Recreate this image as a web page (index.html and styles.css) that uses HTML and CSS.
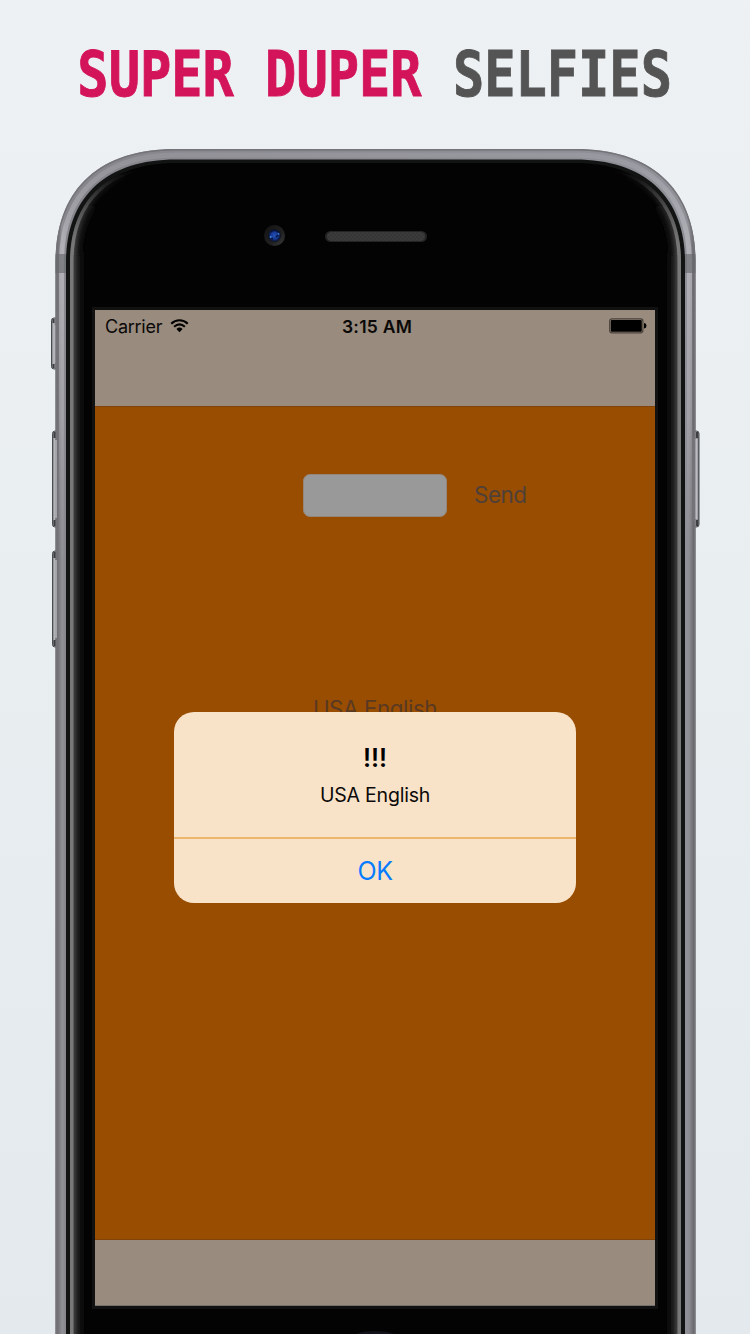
FILE: index.html
```html
<!DOCTYPE html>
<html lang="en">
<head>
<meta charset="utf-8">
<title>Super Duper Selfies</title>
<link rel="stylesheet" href="styles.css">
</head>
<body>
<main class="poster">
  <h1 class="headline"><span class="headline-accent">SUPER DUPER</span> SELFIES</h1>
  <svg class="device-art" viewBox="0 0 750 1334" aria-hidden="true">
    <defs>
      <linearGradient id="metal" gradientUnits="userSpaceOnUse" x1="55" x2="696" y1="0" y2="0">
        <stop offset="0" stop-color="#66666b"/><stop offset=".006" stop-color="#77777c"/>
        <stop offset=".011" stop-color="#919198"/><stop offset=".017" stop-color="#85858b"/>
        <stop offset=".983" stop-color="#909098"/><stop offset=".989" stop-color="#8d8d94"/>
        <stop offset=".995" stop-color="#707075"/><stop offset="1" stop-color="#5c5c61"/>
      </linearGradient>
      <linearGradient id="sheen" gradientUnits="userSpaceOnUse" x1="0" x2="0" y1="149" y2="560">
        <stop offset="0" stop-color="#c4c4cb" stop-opacity=".15"/><stop offset=".25" stop-color="#c8c8ce" stop-opacity=".6"/>
        <stop offset=".65" stop-color="#c4c4c9" stop-opacity=".35"/><stop offset="1" stop-color="#aaa" stop-opacity="0"/>
      </linearGradient>
      <linearGradient id="glowWide" gradientUnits="userSpaceOnUse" x1="0" x2="0" y1="180" y2="280">
        <stop offset="0" stop-color="#161616" stop-opacity="0"/><stop offset="1" stop-color="#161616"/>
      </linearGradient>
      <linearGradient id="glowMid" gradientUnits="userSpaceOnUse" x1="0" x2="0" y1="172" y2="250">
        <stop offset="0" stop-color="#444" stop-opacity="0"/><stop offset="1" stop-color="#444"/>
      </linearGradient>
      <linearGradient id="glowThin" gradientUnits="userSpaceOnUse" x1="0" x2="0" y1="170" y2="245">
        <stop offset="0" stop-color="#777" stop-opacity="0"/><stop offset="1" stop-color="#787878"/>
      </linearGradient>
      <linearGradient id="button" x1="0" x2="1" y1="0" y2="0">
        <stop offset="0" stop-color="#66676b"/><stop offset=".3" stop-color="#b8b9bd"/>
        <stop offset=".6" stop-color="#9a9ba0"/><stop offset="1" stop-color="#606166"/>
      </linearGradient>
      <radialGradient id="lens"><stop offset="0" stop-color="#2450b4"/><stop offset=".55" stop-color="#173995"/><stop offset="1" stop-color="#080d20"/></radialGradient>
      <linearGradient id="ring" x1="0" y1="0" x2="1" y2="1"><stop offset="0" stop-color="#121212"/><stop offset=".6" stop-color="#202020"/><stop offset="1" stop-color="#3c3c3c"/></linearGradient>
      <pattern id="mesh" width="4" height="4" patternUnits="userSpaceOnUse">
        <rect width="4" height="4" fill="#3b3b3b"/><circle cx="1" cy="1" r=".8" fill="#2f2f2f"/><circle cx="3" cy="3" r=".8" fill="#2f2f2f"/>
      </pattern>
      <path id="shell" d="M55.500 1400V262C55.500 190 98 149 176 149H575C653 149 695.500 190 695.500 262V1400Z"/>
      <path id="glass" d="M70 1400V262C70 201 107 163 176 163H575C644 163 681 201 681 262V1400Z"/>
      <clipPath id="shellClip"><use href="#shell"/></clipPath>
      <clipPath id="glassClip"><use href="#glass"/></clipPath>
      <filter id="wide" x="-5%" y="-5%" width="110%" height="110%"><feGaussianBlur stdDeviation="3.200"/></filter>
      <filter id="soft" x="-5%" y="-5%" width="110%" height="110%"><feGaussianBlur stdDeviation="2"/></filter>
      <filter id="fine" x="-5%" y="-5%" width="110%" height="110%"><feGaussianBlur stdDeviation=".7"/></filter>
    </defs>

    <g fill="url(#button)" stroke="#4b4c50" stroke-width="1">
      <rect x="51.500" y="318" width="6" height="51" rx="2.500"/>
      <rect x="52.500" y="431" width="6" height="96" rx="2.500"/>
      <rect x="52.500" y="551" width="6" height="96" rx="2.500"/>
      <rect x="693.500" y="431" width="5.500" height="96" rx="2.500"/>
    </g>
    <use href="#shell" fill="url(#metal)"/>
    <g clip-path="url(#shellClip)" fill="none">
      <use href="#shell" stroke="#737378" stroke-width="3" filter="url(#fine)"/>
      <path d="M61.500 1400V262C61.500 194 103 155 176 155H575C648 155 689.500 194 689.500 262V1400" stroke="url(#sheen)" stroke-width="5" filter="url(#fine)"/>
      <path d="M55 254H67V273H55ZM684 254H696V273H684Z" fill="#66686a" opacity=".65"/>
    </g>
    <path d="M66 1400V262C66 198 105 159.500 176 159.500H575C646 159.500 685 198 685 262V1400Z" fill="#111412"/>
    <use href="#glass" fill="#030303"/>
    <g clip-path="url(#glassClip)" fill="none">
      <use href="#glass" stroke="url(#glowWide)" stroke-width="24" filter="url(#wide)"/>
      <use href="#glass" stroke="url(#glowMid)" stroke-width="12" filter="url(#soft)"/>
      <use href="#glass" stroke="url(#glowThin)" stroke-width="7" filter="url(#fine)"/>
    </g>
    <g fill="none" stroke-width="2">
      <path d="M53.500 319V323M53.500 364V368M54.500 432V438M54.500 526V520M54.500 552V558M54.500 646V640M697 432V438M697 526V520" stroke="#3d3e42"/>
      <path d="M54.500 325V363M56 440V518M56 560V638" stroke="#b4b4ba" stroke-width="1.500"/>
      <path d="M696.500 439V519" stroke="#bcbcc2"/>
      <path d="M693.800 437V521" stroke="#77777d" stroke-width="1"/>
    </g>
    <circle cx="274.500" cy="235.500" r="10.500" fill="url(#ring)"/>
    <circle cx="274.500" cy="235.500" r="6.300" fill="url(#lens)"/>
    <path d="M271 232Q274 229 278 232M270 237L273 239M276 237L279 234" stroke="#071238" stroke-width="1.200" fill="none"/>
    <circle cx="270.700" cy="237" r="1" fill="#3f86dc"/><circle cx="278.500" cy="234" r=".9" fill="#3d72c8"/>
    <rect x="325" y="231" width="102" height="11" rx="5.500" fill="#242424"/>
    <rect x="327" y="232" width="98" height="9" rx="4.500" fill="url(#mesh)"/>
    <ellipse cx="375" cy="1339" rx="24" ry="8" fill="#121019"/>
  </svg>

  <section class="screen">
    <header class="navbar">
      <div class="status">
        <div class="carrier"><span>Carrier</span>
          <svg class="wifi" viewBox="0 0 20 15" aria-hidden="true">
            <path d="M1.300 5.600C6.300.8 13.700.8 18.700 5.600" fill="none" stroke="#000" stroke-width="2.300"/>
            <path d="M4.300 8.900C7.800 5.700 12.200 5.700 15.700 8.900" fill="none" stroke="#000" stroke-width="2.200"/>
            <path d="M6.800 11.100Q10 8.300 13.200 11.100L10 14.500Z"/>
          </svg>
        </div>
        <time class="clock">3:15 AM</time>
        <svg class="battery" viewBox="0 0 38 16" aria-hidden="true">
          <rect x=".7" y=".8" width="33.200" height="14" rx="2.200" fill="none" stroke="#4b433b" stroke-width="1.200"/>
          <rect x="1.800" y="1.900" width="31" height="11.800" rx="1" fill="#000"/>
          <path d="M35 5Q37.500 5.300 37.500 7.800Q37.500 10.300 35 10.600Z"/>
        </svg>
      </div>
    </header>
    <div class="content">
      <div class="compose"><div class="field"></div><span class="send">Send</span></div>
      <p class="language">USA English</p>
    </div>
    <footer class="toolbar"></footer>
    <div class="alert" role="alertdialog">
      <div class="alert-body">
        <h2 class="alert-title">!!!</h2>
        <p class="alert-text">USA English</p>
      </div>
      <div class="alert-action">OK</div>
    </div>
  </section>
</main>
</body>
</html>
```

FILE: styles.css
```css
* { box-sizing: border-box; }
body { margin: 0; }
h1, h2, p { margin: 0; }

.poster {
  position: relative;
  width: 750px;
  height: 1334px;
  overflow: hidden;
  padding-top: 38px;
  background: linear-gradient(#edf1f4, #e9eef1 45%, #e3e9ec);
  font-family: Inter, "Liberation Sans", sans-serif;
}
.headline {
  height: 272px;
  text-align: center;
  white-space: nowrap;
  font: bold 63px/74px "DejaVu Sans Mono", monospace;
  color: #545454;
  -webkit-text-stroke: .9px currentColor;
  transform: scaleX(.825);
  transform-origin: 373px 0;
}
.headline-accent { color: #d3145a; }

.device-art {
  position: absolute;
  inset: 0;
  width: 750px;
  height: 1334px;
}
.screen {
  position: relative;
  display: flex;
  flex-direction: column;
  width: 560px;
  height: 996px;
  margin-left: 95px;
  background: #994d00;
  box-shadow: 0 0 0 3px #111;
}
.navbar { height: 96px; background: #998b7e; }
.status {
  display: grid;
  grid-template-columns: 1fr auto 1fr;
  align-items: center;
  height: 32px;
  padding: 0 8px 0 10px;
  font-size: 18px;
  color: #0a0908;
}
.carrier { display: flex; align-items: center; gap: 8px; letter-spacing: -.25px; }
.wifi { width: 19px; height: 15px; position: relative; top: -1px; }
.clock { font-weight: 600; font-size: 17.5px; letter-spacing: .25px; padding-left: 2px; }
.battery { width: 38px; height: 16px; justify-self: end; }

.content { flex: 1; border-top: 1px solid #804308; border-bottom: 1px solid #804308; }
.compose { display: flex; align-items: center; padding: 67px 0 0 208px; gap: 27px; }
.field { width: 144px; height: 43px; border-radius: 7px; background: #999; border: 1px solid #94877a; }
.send { font-size: 22.5px; line-height: 41px; padding-bottom: 2px; letter-spacing: -.5px; color: #4e4038; }
.language { margin-top: 177px; text-align: center; font-size: 22.5px; line-height: 30px; letter-spacing: -.5px; color: #593922; }
.toolbar { height: 66px; background: #998b7e; border-bottom: 1px solid #73706d; }

.alert {
  position: absolute;
  left: 79px;
  top: 402px;
  width: 402px;
  height: 191px;
  border-radius: 20px;
  background: #f9e3c8;
  text-align: center;
  color: #0b0a09;
}
.alert-body { height: 127px; padding-top: 30px; border-bottom: 2px solid #edb66e; }
.alert-title { font-size: 25px; line-height: 32px; font-weight: 600; color: #000; }
.alert-text { margin-top: 8px; font-size: 19.5px; line-height: 26px; letter-spacing: -.2px; }
.alert-action { font-size: 25px; line-height: 65px; letter-spacing: -.5px; color: #087cff; }
```
